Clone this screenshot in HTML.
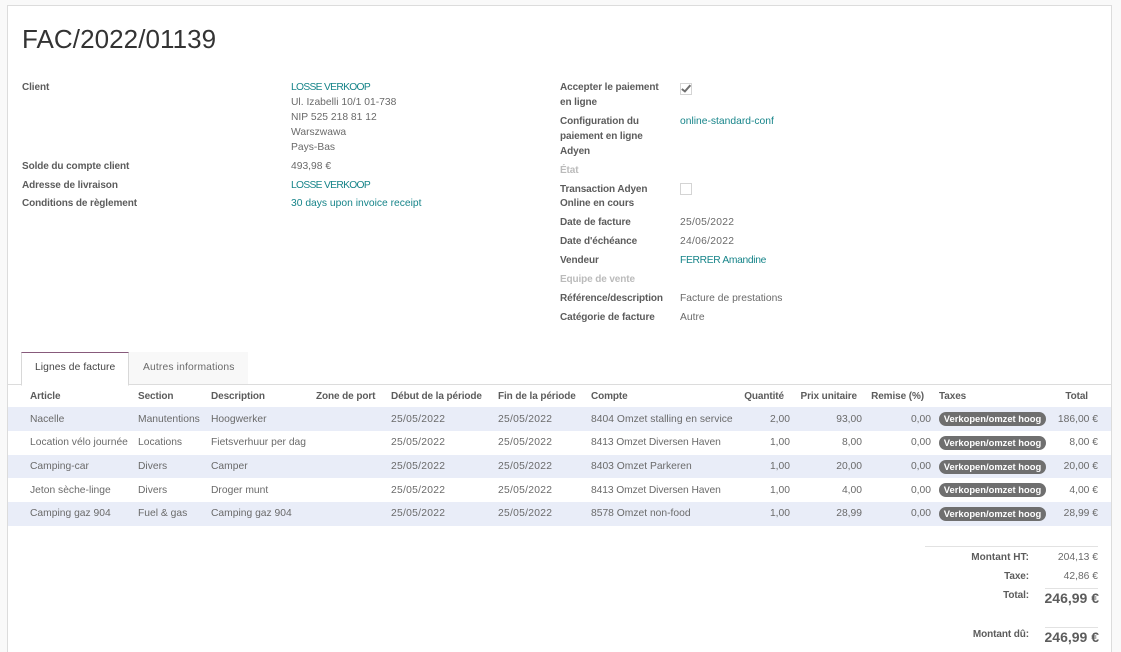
<!DOCTYPE html>
<html><head><meta charset="utf-8"><style>
html,body{margin:0;padding:0;width:1121px;height:652px;overflow:hidden;background:#f9f9f9}
body{font-family:"Liberation Sans",sans-serif;font-size:10.3px;color:#6a6a6a;position:relative;letter-spacing:0}
.sheet{position:absolute;left:7px;top:5px;width:1103px;height:660px;background:#fff;border:1px solid #dcdcdc}
.t{position:absolute;white-space:nowrap;line-height:14px;height:14px;margin-top:1px}
.b{font-weight:bold;color:#5c5c5c;font-size:10px;letter-spacing:-.1px}
.g{font-weight:bold;color:#bbb;font-size:10px;letter-spacing:-.12px}
.l{color:#168489}
.d{letter-spacing:.27px}
.u{letter-spacing:-.7px}
.r{text-align:right}
.band{position:absolute;left:8px;width:1103px;background:#e9edf8}
.badge{position:absolute;left:939px;width:107px;height:14px;border-radius:7px;background:#6f6f6f;color:#fff;font-weight:bold;font-size:9.4px;line-height:14px;text-align:center;letter-spacing:0}
.cb{position:absolute;left:680px;width:10px;height:10px;border:1px solid #d4d4d4;background:#fff}
.line{position:absolute;height:1px;background:#e2e2e2}
</style></head><body>
<div class="sheet"></div>

<div class="t" style="left:22px;top:23px;height:30px;line-height:30px;font-size:26px;color:#333;letter-spacing:.07px">FAC/2022/01139</div>

<div class="t b" style="left:22px;top:80px">Client</div>
<div class="t l u" style="left:291px;top:80px">LOSSE VERKOOP</div>
<div class="t" style="left:291px;top:95px">Ul. Izabelli 10/1 01-738</div>
<div class="t" style="left:291px;top:110px">NIP 525 218 81 12</div>
<div class="t" style="left:291px;top:125px">Warszwawa</div>
<div class="t" style="left:291px;top:140px">Pays-Bas</div>
<div class="t b" style="left:22px;top:159px">Solde du compte client</div>
<div class="t" style="left:291px;top:159px">493,98 €</div>
<div class="t b" style="left:22px;top:178px">Adresse de livraison</div>
<div class="t l u" style="left:291px;top:178px">LOSSE VERKOOP</div>
<div class="t b" style="left:22px;top:196px">Conditions de règlement</div>
<div class="t l" style="left:291px;top:196px">30 days upon invoice receipt</div>

<div class="t b" style="left:560px;top:80px">Accepter le paiement</div>
<div class="t b" style="left:560px;top:95px">en ligne</div>
<div class="cb" style="top:83px"></div>
<svg style="position:absolute;left:680px;top:83px" width="12" height="12" viewBox="0 0 12 12"><path d="M1.8 6 L4.9 8.4 L10.4 2.2" fill="none" stroke="#6f6f6f" stroke-width="2"/></svg>
<div class="t b" style="left:560px;top:114px">Configuration du</div>
<div class="t b" style="left:560px;top:129px">paiement en ligne</div>
<div class="t b" style="left:560px;top:144px">Adyen</div>
<div class="t l" style="left:680px;top:114px">online-standard-conf</div>
<div class="t g" style="left:560px;top:163px">État</div>
<div class="t b" style="left:560px;top:182px">Transaction Adyen</div>
<div class="t b" style="left:560px;top:196px">Online en cours</div>
<div class="cb" style="top:183px"></div>
<div class="t b" style="left:560px;top:215px">Date de facture</div>
<div class="t d" style="left:680px;top:215px">25/05/2022</div>
<div class="t b" style="left:560px;top:234px">Date d'échéance</div>
<div class="t d" style="left:680px;top:234px">24/06/2022</div>
<div class="t b" style="left:560px;top:253px">Vendeur</div>
<div class="t l" style="left:680px;top:253px;letter-spacing:-.33px">FERRER Amandine</div>
<div class="t g" style="left:560px;top:272px">Equipe de vente</div>
<div class="t b" style="left:560px;top:291px">Référence/description</div>
<div class="t" style="left:680px;top:291px">Facture de prestations</div>
<div class="t b" style="left:560px;top:310px">Catégorie de facture</div>
<div class="t" style="left:680px;top:310px">Autre</div>

<div style="position:absolute;left:129px;top:352px;width:119px;height:32px;background:#f8f8f8"></div>
<div class="t" style="left:143px;top:360px;letter-spacing:.15px">Autres informations</div>
<div class="line" style="left:8px;top:384px;width:1103px;background:#dcdcdc"></div>
<div style="position:absolute;left:21px;top:352px;width:106px;height:32px;background:#fff;border:1px solid #d8d8d8;border-top:1px solid #875a7b;border-bottom:1px solid #fff"></div>
<div class="t" style="left:35px;top:360px;color:#444;letter-spacing:.08px">Lignes de facture</div>

<div class="band" style="top:407px;height:24px"></div>
<div class="band" style="top:455px;height:23px"></div>
<div class="band" style="top:502px;height:24px"></div>

<div class="t b" style="left:30px;top:389px">Article</div>
<div class="t b" style="left:138px;top:389px">Section</div>
<div class="t b" style="left:211px;top:389px">Description</div>
<div class="t b" style="left:316px;top:389px">Zone de port</div>
<div class="t b" style="left:391px;top:389px">Début de la période</div>
<div class="t b" style="left:498px;top:389px">Fin de la période</div>
<div class="t b" style="left:591px;top:389px">Compte</div>
<div class="t b r" style="right:337px;top:389px">Quantité</div>
<div class="t b r" style="right:264px;top:389px">Prix unitaire</div>
<div class="t b r" style="right:197px;top:389px">Remise (%)</div>
<div class="t b" style="left:939px;top:389px">Taxes</div>
<div class="t b r" style="right:33px;top:389px">Total</div>

<div class="t" style="left:30px;top:412px">Nacelle</div>
<div class="t" style="left:138px;top:412px">Manutentions</div>
<div class="t" style="left:211px;top:412px">Hoogwerker</div>
<div class="t d" style="left:391px;top:412px">25/05/2022</div>
<div class="t d" style="left:498px;top:412px">25/05/2022</div>
<div class="t" style="left:591px;top:412px;letter-spacing:.03px">8404 Omzet stalling en service</div>
<div class="t r" style="right:331px;top:412px">2,00</div>
<div class="t r" style="right:259px;top:412px">93,00</div>
<div class="t r" style="right:190px;top:412px">0,00</div>
<div class="badge" style="top:412px">Verkopen/omzet hoog</div>
<div class="t r" style="right:23px;top:412px">186,00 €</div>

<div class="t" style="left:30px;top:435px">Location vélo journée</div>
<div class="t" style="left:138px;top:435px">Locations</div>
<div class="t" style="left:211px;top:435px">Fietsverhuur per dag</div>
<div class="t d" style="left:391px;top:435px">25/05/2022</div>
<div class="t d" style="left:498px;top:435px">25/05/2022</div>
<div class="t" style="left:591px;top:435px;letter-spacing:-.1px">8413 Omzet Diversen Haven</div>
<div class="t r" style="right:331px;top:435px">1,00</div>
<div class="t r" style="right:259px;top:435px">8,00</div>
<div class="t r" style="right:190px;top:435px">0,00</div>
<div class="badge" style="top:436px">Verkopen/omzet hoog</div>
<div class="t r" style="right:23px;top:435px">8,00 €</div>

<div class="t" style="left:30px;top:459px">Camping-car</div>
<div class="t" style="left:138px;top:459px">Divers</div>
<div class="t" style="left:211px;top:459px">Camper</div>
<div class="t d" style="left:391px;top:459px">25/05/2022</div>
<div class="t d" style="left:498px;top:459px">25/05/2022</div>
<div class="t" style="left:591px;top:459px">8403 Omzet Parkeren</div>
<div class="t r" style="right:331px;top:459px">1,00</div>
<div class="t r" style="right:259px;top:459px">20,00</div>
<div class="t r" style="right:190px;top:459px">0,00</div>
<div class="badge" style="top:460px">Verkopen/omzet hoog</div>
<div class="t r" style="right:23px;top:459px">20,00 €</div>

<div class="t" style="left:30px;top:483px">Jeton sèche-linge</div>
<div class="t" style="left:138px;top:483px">Divers</div>
<div class="t" style="left:211px;top:483px">Droger munt</div>
<div class="t d" style="left:391px;top:483px">25/05/2022</div>
<div class="t d" style="left:498px;top:483px">25/05/2022</div>
<div class="t" style="left:591px;top:483px;letter-spacing:-.1px">8413 Omzet Diversen Haven</div>
<div class="t r" style="right:331px;top:483px">1,00</div>
<div class="t r" style="right:259px;top:483px">4,00</div>
<div class="t r" style="right:190px;top:483px">0,00</div>
<div class="badge" style="top:483px">Verkopen/omzet hoog</div>
<div class="t r" style="right:23px;top:483px">4,00 €</div>

<div class="t" style="left:30px;top:506px">Camping gaz 904</div>
<div class="t" style="left:138px;top:506px">Fuel &amp; gas</div>
<div class="t" style="left:211px;top:506px">Camping gaz 904</div>
<div class="t d" style="left:391px;top:506px">25/05/2022</div>
<div class="t d" style="left:498px;top:506px">25/05/2022</div>
<div class="t" style="left:591px;top:506px">8578 Omzet non-food</div>
<div class="t r" style="right:331px;top:506px">1,00</div>
<div class="t r" style="right:259px;top:506px">28,99</div>
<div class="t r" style="right:190px;top:506px">0,00</div>
<div class="badge" style="top:507px">Verkopen/omzet hoog</div>
<div class="t r" style="right:23px;top:506px">28,99 €</div>

<div class="line" style="left:925px;top:546px;width:173px"></div>
<div class="t b r" style="right:92px;top:550px;letter-spacing:.05px">Montant HT:</div>
<div class="t r" style="right:23px;top:550px">204,13 €</div>
<div class="t b r" style="right:92px;top:569px">Taxe:</div>
<div class="t r" style="right:23px;top:569px">42,86 €</div>
<div class="line" style="left:1045px;top:588px;width:53px"></div>
<div class="t b r" style="right:92px;top:588px">Total:</div>
<div class="t b r" style="right:22px;top:589px;height:16px;line-height:16px;font-size:14px;letter-spacing:0">246,99 €</div>
<div class="line" style="left:1045px;top:627px;width:53px"></div>
<div class="t b r" style="right:92px;top:627px">Montant dû:</div>
<div class="t b r" style="right:22px;top:628px;height:16px;line-height:16px;font-size:14px;letter-spacing:0">246,99 €</div>
</body></html>
